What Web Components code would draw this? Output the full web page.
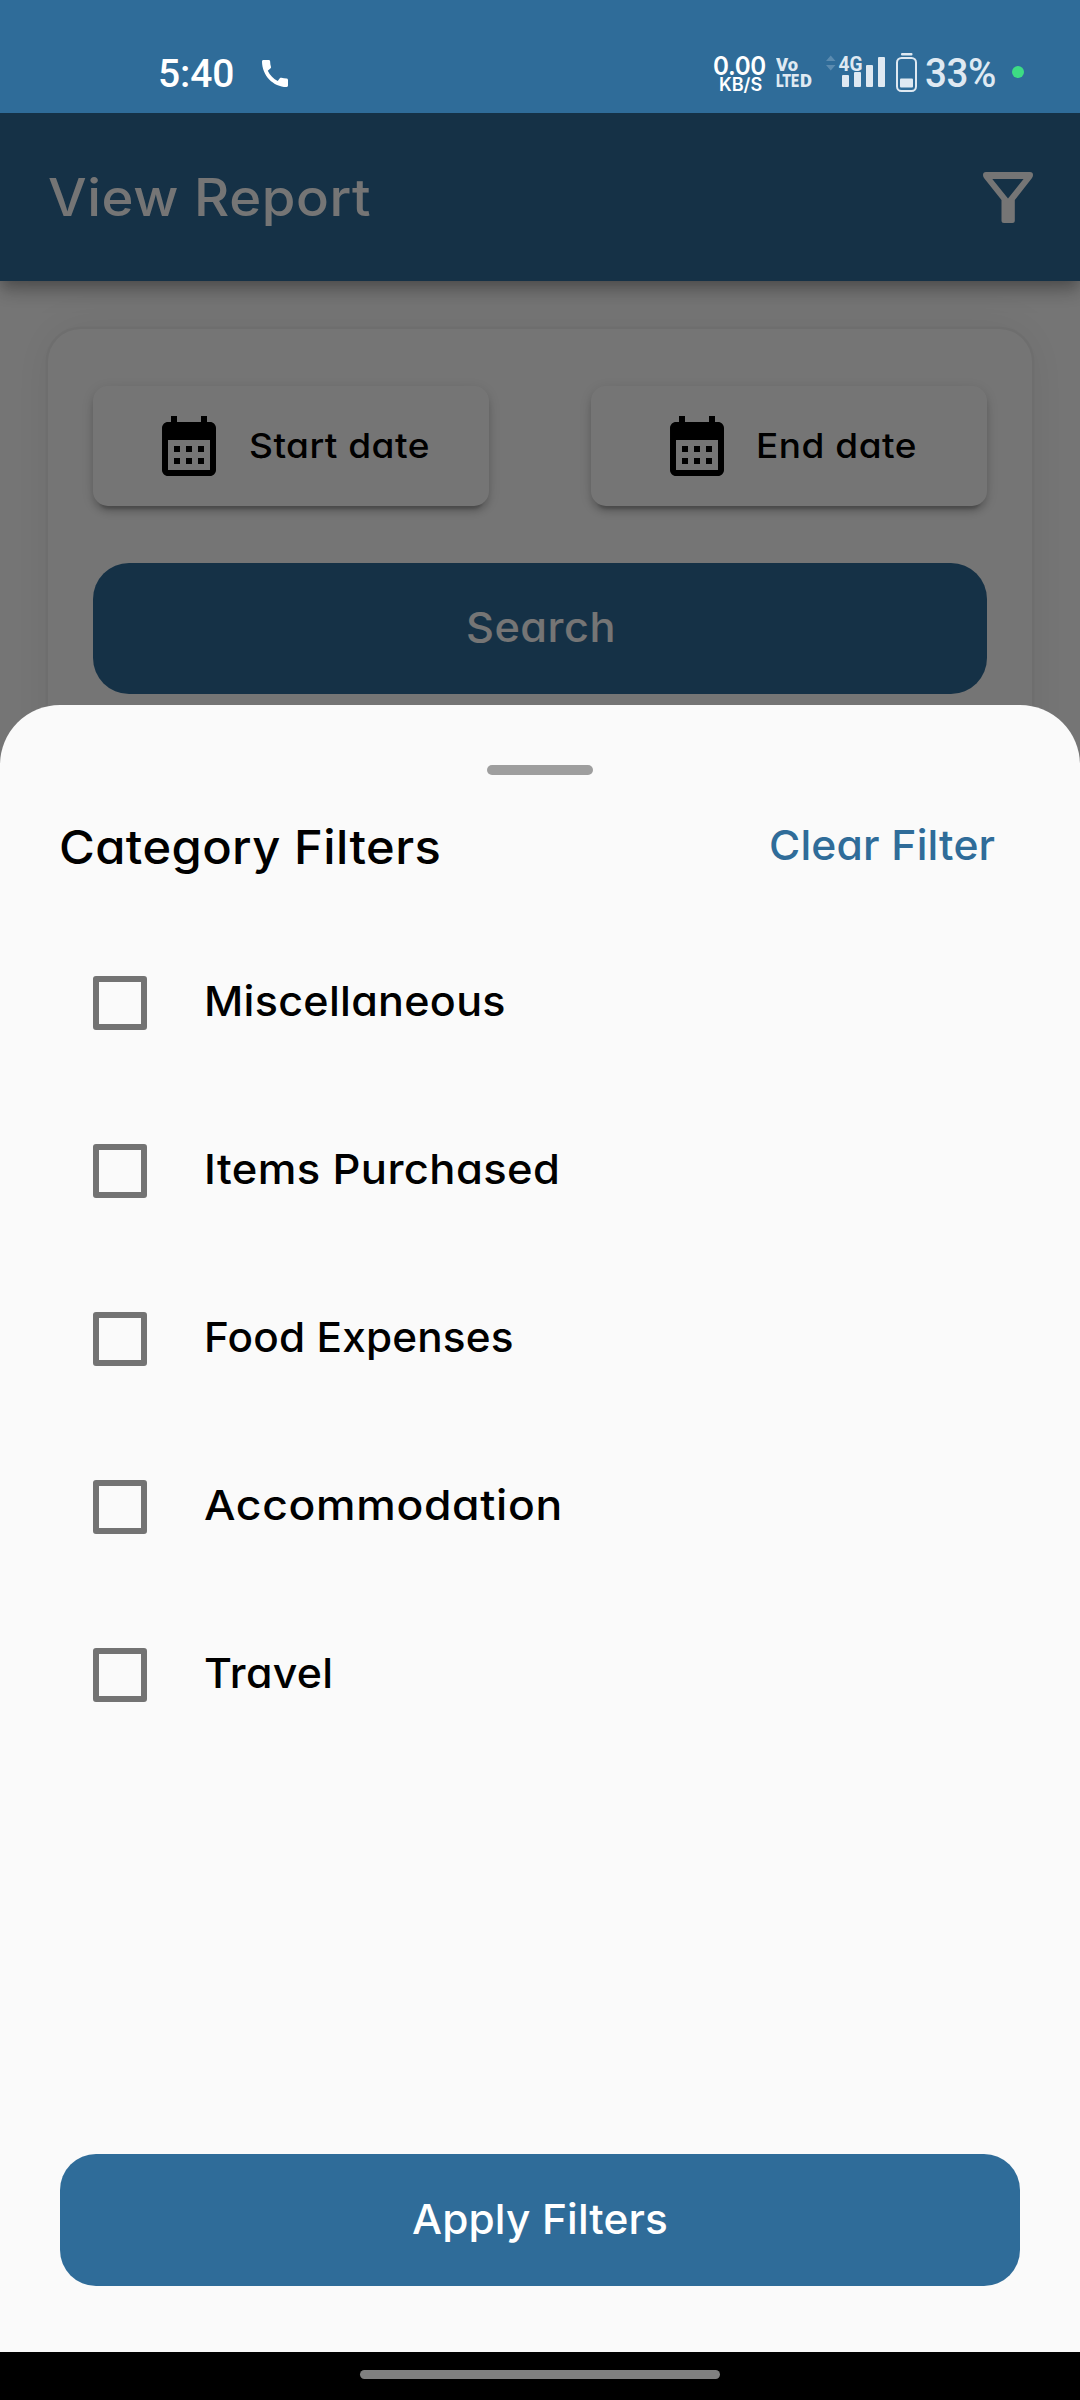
<!DOCTYPE html>
<html lang="en">
<head>
<meta charset="utf-8">
<title>View Report</title>
<style>
  html, body { margin: 0; padding: 0; }
  body { width: 1080px; height: 2400px; overflow: hidden; background: #000;
    font-family: Inter, "Open Sans", sans-serif; font-weight: 500; color: #000;
    --brand: #2f6c99; --sheet: #fafafa; }
</style>
</head>
<body>
<report-screen></report-screen>
<script>
const define = (name, html, ready) => customElements.define(name, class extends HTMLElement {
  constructor() {
    super();
    const t = document.createElement('template');
    t.innerHTML = html;
    this.attachShadow({ mode: 'open' }).append(t.content.cloneNode(true));
  }
  connectedCallback() { if (ready) ready.call(this, this.shadowRoot); }
});

/* A single line of text whose visible ink spans exactly the "w" attribute:
   most of the difference goes into glyph width, the rest into tracking. */
const ctx = document.createElement('canvas').getContext('2d');
define('ink-label', `<style>
  :host { display: block; flex: none; white-space: nowrap; }
  span { display: inline-block; line-height: 1; vertical-align: top; transform-origin: 0 50%; font-feature-settings: "cv11"; }
</style><span></span>`, function (root) {
  const span = root.querySelector('span');
  const text = this.getAttribute('text'), w = +this.getAttribute('w');
  span.textContent = text;
  this.style.width = w + 'px';
  this.style.fontSize = this.getAttribute('size') + 'px';
  this.style.height = this.getAttribute('size') + 'px';
  const cs = getComputedStyle(span);
  ctx.font = `${cs.fontWeight} ${cs.fontSize} ${cs.fontFamily}`;
  const m = ctx.measureText(text);
  const lsb = -m.actualBoundingBoxLeft, rsb = m.width - m.actualBoundingBoxRight;
  const natural = span.getBoundingClientRect().width;
  const scale = Math.pow(w / (natural - lsb - rsb), 0.75);
  span.style.letterSpacing = (w / scale + lsb + rsb - natural) / (text.length - 1) + 'px';
  span.style.transform = `scaleX(${scale})`;
  span.style.marginLeft = -lsb * scale + 'px';
});

define('status-bar', `<style>
  :host { display: flex; align-items: center; box-sizing: border-box; height: 113px; flex: none;
    padding: 33px 56px 0 160px; background: var(--brand); color: #fff; }
  .time { font-family: Roboto, sans-serif; margin-top: 2px; }
  .phone { margin-left: 29px; }
  .right { margin-left: auto; display: flex; align-items: center; }
  .speed { display: flex; flex-direction: column; align-items: center; width: 52px; font-weight: 600; }
  .pct { font-family: Roboto, sans-serif; font-weight: 500; color: #dfe9f2; margin: 2px 0 0 8px; }
  .dot { width: 12px; height: 12px; border-radius: 50%; background: #3ddc84; margin: -2px 0 0 17px; }
  svg { display: block; flex: none; }
</style>
<ink-label class="time" text="5:40" size="39.5" w="73"></ink-label>
<svg class="phone" width="26" height="27" viewBox="3 3 18 18" preserveAspectRatio="none" fill="#fff"><path d="M20.01 15.38c-1.23 0-2.42-.2-3.53-.56-.35-.12-.74-.03-1.01.24l-1.57 1.97c-2.83-1.35-5.48-3.9-6.89-6.83l1.95-1.66c.27-.28.35-.67.24-1.02-.37-1.11-.56-2.3-.56-3.53 0-.54-.45-.99-.99-.99H4.19C3.65 3 3 3.24 3 3.99 3 13.28 10.73 21 20.01 21c.71 0 .99-.63.99-1.18v-3.45c0-.54-.45-.99-.99-.99z"/></svg>
<div class="right">
  <div class="speed">
    <ink-label text="0.00" size="25.5" w="51.5"></ink-label>
    <ink-label text="KB/S" size="18" w="41.5" style="margin:-2.5px 0 0 2px"></ink-label>
  </div>
  <svg width="36" height="40" style="margin-left:10px" viewBox="777 53 36 40" fill="#dfe9f2" font-family="Roboto, sans-serif" font-weight="900">
    <text x="777" y="71" font-size="19" textLength="22" lengthAdjust="spacingAndGlyphs">Vo</text>
    <text x="777" y="86.5" font-size="18.5" textLength="23" lengthAdjust="spacingAndGlyphs">LTE</text>
    <text x="801" y="86.5" font-size="18.5" textLength="12" lengthAdjust="spacingAndGlyphs">D</text>
  </svg>
  <svg width="61" height="40" style="margin-left:13px" viewBox="826 53 61 40" fill="#dfe9f2">
    <path d="M827 61l4.7-5.5 4.8 5.5zM827 65h9.5l-4.8 5.5z" opacity=".25"/>
    <text x="839.5" y="70.5" font-size="21" font-family="Roboto, sans-serif" font-weight="700" textLength="24" lengthAdjust="spacingAndGlyphs">4G</text>
    <rect x="843" y="75" width="7" height="12" rx="1"/><rect x="855" y="72" width="7" height="15" rx="1"/>
    <rect x="867" y="65" width="7" height="22" rx="1"/><rect x="879" y="57" width="7" height="30" rx="1"/>
  </svg>
  <svg width="22" height="40" style="margin-left:10px" viewBox="897 52 22 40" fill="#dfe9f2">
    <rect x="902" y="52" width="11.5" height="2.4" rx="1"/>
    <rect x="898" y="57" width="19" height="33" rx="4.5" fill="none" stroke="#dfe9f2" stroke-width="2"/>
    <rect x="901" y="77.5" width="13" height="9" rx="1"/>
  </svg>
  <ink-label class="pct" text="33%" size="40" w="69"></ink-label>
  <div class="dot"></div>
</div>`);

define('app-bar', `<style>
  :host { display: flex; align-items: center; justify-content: space-between; box-sizing: border-box;
    height: 168px; flex: none; padding: 1px 47px 0 49px; background: var(--brand); color: #fff;
    box-shadow: 0 6px 12px -3px rgba(0,0,0,.2), 0 12px 15px 0 rgba(0,0,0,.14), 0 3px 30px 0 rgba(0,0,0,.12); }
  svg { display: block; }
</style>
<ink-label text="View Report" size="51.5" w="321"></ink-label>
<svg width="50" height="51" viewBox="983 172 50 51" fill="#fff" fill-rule="evenodd"><path d="M986 172H1030Q1033 172 1033 175Q1033 176.500 1032 178L1014.800 200V220.500Q1014.800 223 1012.300 223H1004Q1001.500 223 1001.500 220.500V200L984 178Q983 176.500 983 175Q983 172 986 172ZM992.300 179L1008 198.500L1023.600 179Z"/></svg>`);

define('date-button', `<style>
  :host { display: flex; align-items: center; box-sizing: border-box; width: 396px; height: 120px;
    border-radius: 15px; background: #fff;
    box-shadow: 0 9px 3px -6px rgba(0,0,0,.2), 0 6px 6px 0 rgba(0,0,0,.14), 0 3px 15px 0 rgba(0,0,0,.12); }
  svg { display: block; flex: none; margin-right: 26px; }
</style>
<svg width="72" height="72" viewBox="0 0 24 24"><path d="M19 4h-1V2h-2v2H8V2H6v2H5c-1.110 0-1.990.9-1.990 2L3 20c0 1.100.890 2 2 2h14c1.100 0 2-.9 2-2V6c0-1.100-.9-2-2-2zm0 16H5V10h14v10zM9 14H7v-2h2v2zm4 0h-2v-2h2v2zm4 0h-2v-2h2v2zM9 18H7v-2h2v2zm4 0h-2v-2h2v2zm4 0h-2v-2h2v2z"/></svg>
<slot></slot>`);

define('primary-button', `<style>
  :host { display: flex; align-items: center; justify-content: center; box-sizing: border-box;
    height: 131.4px; padding-bottom: var(--lift, 0px); flex: none; border-radius: 36px; background: var(--brand); color: #fff; }
</style><slot></slot>`);

define('search-card', `<style>
  :host { display: block; box-sizing: border-box; height: 600px; margin: 48px 48px 0; padding: 57px 45px;
    border-radius: 33px; background: #fff;
    box-shadow: 0 0 0 2.6px #f0f0f0, 0 0 45px 0 rgba(0,0,0,.07); }
  .dates { display: flex; justify-content: space-between; margin-bottom: 57px; }
  primary-button { --lift: 2px; }
</style>
<div class="dates">
  <date-button style="padding-left:59.500px"><ink-label text="Start date" size="34.5" w="178"></ink-label></date-button>
  <date-button style="padding-left:69.500px"><ink-label text="End date" size="34.5" w="157"></ink-label></date-button>
</div>
<primary-button><ink-label text="Search" size="41" w="144.5"></ink-label></primary-button>`);

define('check-row', `<style>
  :host { display: flex; align-items: center; gap: 60px; height: 168px; padding-left: 93px; }
  i { box-sizing: border-box; width: 54px; height: 54px; border: 6px solid #737373; border-radius: 3px; }
  ::slotted(*) { margin-bottom: 3px; }
</style><i></i><slot></slot>`);

define('filter-sheet', `<style>
  :host { display: flex; flex-direction: column; box-sizing: border-box; height: 1646.7px; flex: none;
    padding: 60px 0 66.5px; background: var(--sheet); border-radius: 60px 60px 0 0; }
  .grip { width: 105.5px; height: 10px; border-radius: 5px; background: #9e9e9e; margin: 0 auto; flex: none; }
  header { display: flex; align-items: center; justify-content: space-between; height: 144px; padding: 0 85px 0 61.5px; }
  .clear { color: var(--brand); margin-top: -4px; }
  primary-button { margin: auto 60px 0; }
</style>
<div class="grip"></div>
<header>
  <ink-label text="Category Filters" size="46.5" w="377.5"></ink-label>
  <ink-label class="clear" text="Clear Filter" size="41.5" w="224"></ink-label>
</header>
<div>
  <check-row><ink-label text="Miscellaneous" size="41.5" w="297"></ink-label></check-row>
  <check-row><ink-label text="Items Purchased" size="41.5" w="350"></ink-label></check-row>
  <check-row><ink-label text="Food Expenses" size="41.5" w="305"></ink-label></check-row>
  <check-row><ink-label text="Accommodation" size="41.5" w="354" style="margin-left:-1.5px"></ink-label></check-row>
  <check-row><ink-label text="Travel" size="41.5" w="125.5" style="margin-left:-1.5px"></ink-label></check-row>
</div>
<primary-button><ink-label text="Apply Filters" size="41.5" w="253.5"></ink-label></primary-button>`);

define('nav-pill', `<style>
  :host { display: flex; justify-content: center; box-sizing: border-box; height: 48px; padding-top: 18px; background: #000; flex: none; }
  i { width: 360px; height: 9px; border-radius: 4.5px; background: #808080; }
</style><i></i>`);

define('report-screen', `<style>
  :host { display: flex; flex-direction: column; width: 1080px; height: 2400px; }
  .stage { position: relative; flex: 1; overflow: hidden; background: #fff; }
  .scrim { position: absolute; inset: 0; display: flex; flex-direction: column; justify-content: flex-end; background: rgba(0,0,0,.54); }
  app-bar { position: relative; }
</style>
<status-bar></status-bar>
<div class="stage">
  <app-bar></app-bar>
  <search-card></search-card>
  <div class="scrim"><filter-sheet></filter-sheet></div>
</div>
<nav-pill></nav-pill>`);
</script>
</body>
</html>
